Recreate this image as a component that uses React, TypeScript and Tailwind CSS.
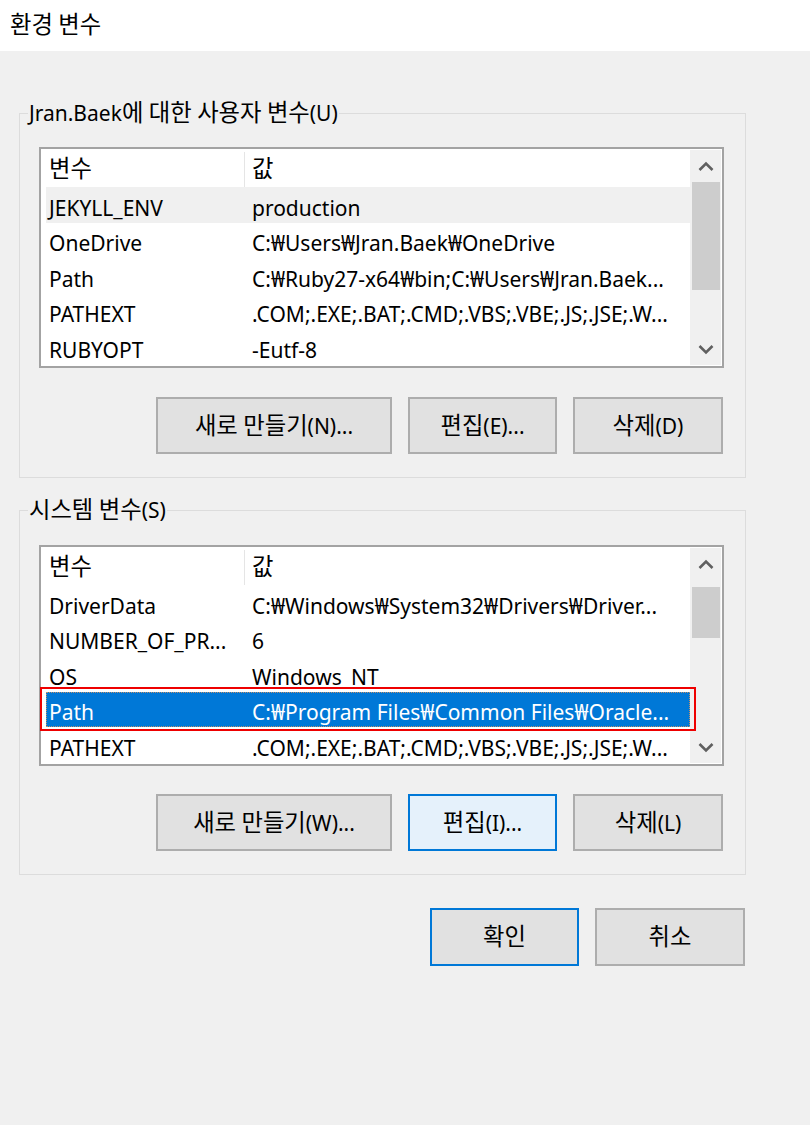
import React from 'react';

type Row = { name: string; value: string; state?: 'hover' | 'selected' };

const userVars: Row[] = [
  { name: 'JEKYLL_ENV', value: 'production', state: 'hover' },
  { name: 'OneDrive', value: 'C:₩Users₩Jran.Baek₩OneDrive' },
  { name: 'Path', value: 'C:₩Ruby27-x64₩bin;C:₩Users₩Jran.Baek...' },
  { name: 'PATHEXT', value: '.COM;.EXE;.BAT;.CMD;.VBS;.VBE;.JS;.JSE;.W...' },
  { name: 'RUBYOPT', value: '-Eutf-8' },
];

const systemVars: Row[] = [
  { name: 'DriverData', value: 'C:₩Windows₩System32₩Drivers₩Driver...' },
  { name: 'NUMBER_OF_PR...', value: '6' },
  { name: 'OS', value: 'Windows_NT' },
  { name: 'Path', value: 'C:₩Program Files₩Common Files₩Oracle...', state: 'selected' },
  { name: 'PATHEXT', value: '.COM;.EXE;.BAT;.CMD;.VBS;.VBE;.JS;.JSE;.W...' },
];

// Malgun Gothic hangul looks bigger than the Noto CJK one, so bump hangul runs a little
function K({ t }: { t: string }) {
  const parts = t.split(/([\uAC00-\uD7A3]+)/);
  return (
    <span>
      {parts.map((p, i) =>
        /[\uAC00-\uD7A3]/.test(p) ? (
          <span key={i} className="text-[1.11em] leading-none">
            {p}
          </span>
        ) : (
          <React.Fragment key={i}>{p}</React.Fragment>
        )
      )}
    </span>
  );
}

function Chevron({ down }: { down?: boolean }) {
  return (
    <svg width="16" height="11" viewBox="0 0 16 11" className="text-[#606060]">
      <path
        d={down ? 'M1.5 2 L8 8.5 L14.5 2' : 'M1.5 9 L8 2.5 L14.5 9'}
        fill="none"
        stroke="currentColor"
        strokeWidth="2.6"
      />
    </svg>
  );
}

function VarList({ rows, thumbTop, thumbHeight }: { rows: Row[]; thumbTop: number; thumbHeight: number }) {
  return (
    <div className="flex h-[221px] w-[685px] border-2 border-[#a3a3a3] bg-white">
      <div className="flex-1 pl-[5px]">
        {/* header */}
        <div className="flex h-[38px] items-center pt-[3px]">
          <div className="w-[198px] pl-[3px]">
            <K t="변수" />
          </div>
          <div className="h-full w-px bg-[#e5e5e5]" />
          <div className="pl-[7px]">
            <K t="값" />
          </div>
        </div>
        {rows.map((r) => (
          <div
            key={r.name}
            className={
              'relative flex h-[35.5px] items-center pt-[7px] ' +
              (r.state === 'hover' ? 'bg-[#f0f0f0] ' : '') +
              (r.state === 'selected' ? 'bg-[#0078d7] text-white outline-1 outline-dotted outline-[#c0906a] -outline-offset-1 ' : '')
            }
          >
            <div className="w-[198px] whitespace-nowrap pl-[3px]">{r.name}</div>
            <div className="whitespace-nowrap pl-[8px]">{r.value}</div>
            {r.state === 'selected' && (
              <div className="pointer-events-none absolute -top-[5px] -bottom-[4px] -left-[6px] -right-[6px] border-2 border-[#ee0000]" />
            )}
          </div>
        ))}
      </div>
      {/* scrollbar */}
      <div className="my-px mr-px flex w-[31px] flex-col bg-[#f0f0f0]">
        <div className="flex h-[32px] shrink-0 items-center justify-center">
          <Chevron />
        </div>
        <div className="relative flex-1">
          <div className="absolute left-[2px] right-px bg-[#cdcdcd]" style={{ top: thumbTop, height: thumbHeight }} />
        </div>
        <div className="flex h-[32px] shrink-0 items-center justify-center">
          <Chevron down />
        </div>
      </div>
    </div>
  );
}

function Btn({ label, w, variant, h = 'h-[57px]' }: { label: string; w: string; variant?: 'hot' | 'default'; h?: string }) {
  const style =
    variant === 'hot'
      ? 'bg-[#e5f1fb] border-[#0078d7]'
      : variant === 'default'
      ? 'bg-[#e1e1e1] border-[#0078d7]'
      : 'bg-[#e1e1e1] border-[#adadad]';
  return (
    <div className={'flex items-center justify-center border-2 pt-[2px] ' + h + ' ' + style + ' ' + w}>
      <K t={label} />
    </div>
  );
}

function Group({ title, children, pt }: { title: string; children: React.ReactNode; pt: string }) {
  return (
    <div className={'relative w-[727px] border border-[#dcdcdc] pb-[23px] pl-[19px] pr-[21px] ' + pt}>
      <span className="absolute -top-[15px] left-[8px] bg-[#f0f0f0] px-[1px] text-[21px] leading-[28px]">
        <K t={title} />
      </span>
      {children}
    </div>
  );
}

export default function App() {
  return (
    <div
      className="h-[1125px] w-[810px] overflow-hidden bg-[#f0f0f0] text-[21px] text-black"
      style={{ fontFamily: '"Noto Sans", "Noto Sans CJK KR", sans-serif' }}
    >
      <div className="flex h-[51px] items-center bg-white pl-[10px] text-[21px]">
        <K t="환경 변수" />
      </div>

      <div className="pl-[19px] pt-[62px]">
        <Group title="Jran.Baek에 대한 사용자 변수(U)" pt="pt-[33px]">
          <VarList rows={userVars} thumbTop={0} thumbHeight={108} />
          <div className="mr-px mt-[29px] flex justify-end gap-[16px]">
            <Btn w="w-[236px]" label="새로 만들기(N)..." />
            <Btn w="w-[149px]" label="편집(E)..." />
            <Btn w="w-[150px]" label="삭제(D)" />
          </div>
        </Group>

        <div className="mt-[32px]">
          <Group title="시스템 변수(S)" pt="pt-[34px]">
            <VarList rows={systemVars} thumbTop={7} thumbHeight={51} />
            <div className="mr-px mt-[28px] flex justify-end gap-[16px]">
              <Btn w="w-[236px]" label="새로 만들기(W)..." />
              <Btn w="w-[149px]" label="편집(I)..." variant="hot" />
              <Btn w="w-[150px]" label="삭제(L)" />
            </div>
          </Group>
        </div>

        <div className="mr-[65px] mt-[33px] flex justify-end gap-[16px]">
          <Btn w="w-[149px]" h="h-[58px]" label="확인" variant="default" />
          <Btn w="w-[150px]" h="h-[58px]" label="취소" />
        </div>
      </div>
    </div>
  );
}
